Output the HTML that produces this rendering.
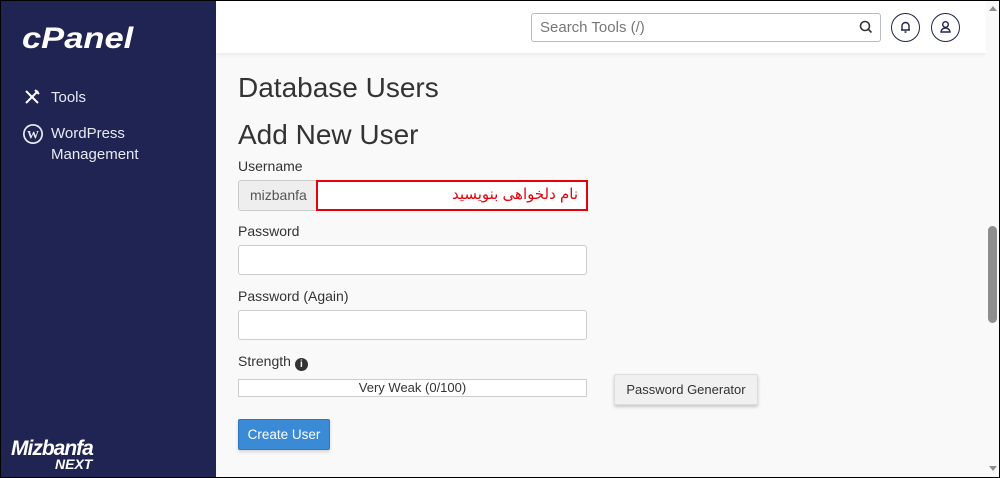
<!DOCTYPE html>
<html><head><meta charset="utf-8"><style>
*{box-sizing:border-box;margin:0;padding:0}
body{width:1000px;height:478px;overflow:hidden;background:#000;font-family:"Liberation Sans","DejaVu Sans",sans-serif;position:relative}
.frame{position:absolute;left:1px;top:1px;width:998px;height:476px;background:#f9f9f9;overflow:hidden}
.side{position:absolute;left:0;top:0;width:215px;height:476px;background:#1f2452;color:#e8e9f0}
.logo{position:absolute;left:21px;top:21px;font-size:30px;font-weight:bold;font-style:italic;color:#fff;letter-spacing:0px;transform:scaleX(1.15);transform-origin:left}
.nav{position:absolute;left:50px;font-size:15px;line-height:21px;color:#e8e9f2}
.hdr{position:absolute;left:215px;top:0;width:770px;height:52px;background:#fff;box-shadow:0 2px 4px rgba(0,0,0,.06)}
.search{position:absolute;left:315px;top:12px;width:350px;height:29px;border:1px solid #b9bcc4;border-radius:3px;font-size:15px;color:#777;padding:5px 8px}
.circ{position:absolute;top:12px;width:29px;height:29px;border:1.5px solid #1f2452;border-radius:50%}
.scroll{position:absolute;left:985px;top:0;width:13px;height:476px;background:#f9f9f9}
.thumb{position:absolute;left:987px;top:225px;width:9px;height:97px;background:#8e8e8e;border-radius:5px}
h1{position:absolute;left:237px;font-weight:normal;color:#333;font-size:28px}
.lbl{position:absolute;left:237px;font-size:14px;color:#333}
.inp{position:absolute;left:237px;width:349px;height:30px;background:#fff;border:1px solid #ccc;border-radius:3px}
.btn{position:absolute;font-size:14px;border-radius:2px}
</style></head><body><div class="frame">
<div class="side">
<div class="logo">cPanel</div>
<svg style="position:absolute;left:22px;top:87px" width="18" height="18" viewBox="0 0 18 18" fill="none" stroke="#fff" stroke-width="2"><path d="M3 3l12 12M15 3L3 15M12 2l4 4"/></svg>
<div class="nav" style="top:86px">Tools</div>
<svg style="position:absolute;left:21px;top:122px" width="22" height="22" viewBox="0 0 22 22"><circle cx="11" cy="11" r="10" fill="#e8e9f2"/><circle cx="11" cy="11" r="8.3" fill="#1f2452"/><text x="11" y="15.5" text-anchor="middle" font-size="12" font-weight="bold" fill="#e8e9f2" font-family="Liberation Serif">W</text></svg>
<div class="nav" style="top:122px">WordPress<br>Management</div>
<div style="position:absolute;left:10px;top:436px;font-size:21px;font-weight:bold;font-style:italic;color:#fff;letter-spacing:-1px">Mizbanfa</div>
<div style="position:absolute;left:54px;top:455px;font-size:14px;font-weight:bold;font-style:italic;color:#fff">NEXT</div>
</div>
<div class="hdr">
<div class="search">Search Tools (/)</div>
<svg style="position:absolute;left:643px;top:19px" width="14" height="14" viewBox="0 0 14 14" fill="none" stroke="#333" stroke-width="1.6"><circle cx="6" cy="6" r="4.5"/><path d="M9.5 9.5l3 3"/></svg>
<div class="circ" style="left:675px"><svg style="position:absolute;left:7px;top:6px" width="13" height="14" viewBox="0 0 13 14" fill="none" stroke="#1f2452" stroke-width="1.4"><path d="M3 10V6a3.5 3.5 0 017 0v4H2h9M5.5 12h2"/></svg></div>
<div class="circ" style="left:715px"><svg style="position:absolute;left:7px;top:6px" width="13" height="14" viewBox="0 0 13 14" fill="none" stroke="#1f2452" stroke-width="1.4"><circle cx="6.5" cy="4.5" r="2.8"/><path d="M2 12a4.5 4 0 019 0z"/></svg></div>
</div>
<div class="scroll"></div><div class="thumb"></div>
<div style="position:absolute;left:988px;top:5px;border:4px solid transparent;border-bottom:5px solid #8e8e8e;border-top:0"></div>
<div style="position:absolute;left:988px;top:465px;border:4px solid transparent;border-top:5px solid #8e8e8e;border-bottom:0"></div>
<h1 style="top:71px">Database Users</h1>
<h1 style="top:118px">Add New User</h1>
<div class="lbl" style="top:157px">Username</div>
<div style="position:absolute;left:237px;top:179px;width:80px;height:31px;background:#eee;border:1px solid #ccc;border-radius:3px 0 0 3px;font-size:14px;color:#555;padding:6px 0 0 11px">mizbanfa</div>
<div style="position:absolute;left:315px;top:179px;width:272px;height:31px;background:#fff;border:2px solid #e8000b;font-family:'Liberation Sans','DejaVu Sans',sans-serif;font-size:15px;color:#e8000b;text-align:right;padding:3px 8px 0 0" dir="rtl">نام دلخواهی بنویسید</div>
<div class="lbl" style="top:222px">Password</div>
<div class="inp" style="top:244px"></div>
<div class="lbl" style="top:287px">Password (Again)</div>
<div class="inp" style="top:309px"></div>
<div class="lbl" style="top:352px">Strength <span style="display:inline-block;width:13px;height:13px;border-radius:50%;background:#333;color:#fff;font-size:10px;font-weight:bold;text-align:center;line-height:13px;vertical-align:-1px">i</span></div>
<div style="position:absolute;left:237px;top:378px;width:349px;height:18px;background:#fff;border:1px solid #ccc;font-size:13px;color:#333;text-align:center;line-height:16px">Very Weak (0/100)</div>
<div class="btn" style="left:613px;top:373px;width:144px;height:31px;background:#f0f0f0;border:1px solid #ddd;color:#333;box-shadow:0 2px 3px rgba(0,0,0,.2);text-align:center;line-height:29px;font-size:13px">Password Generator</div>
<div class="btn" style="left:237px;top:418px;width:92px;height:31px;background:#3a8ad6;border:1px solid #2f78c0;color:#fff;text-align:center;line-height:29px;box-shadow:0 2px 3px rgba(0,0,0,.15);font-size:13.5px">Create User</div>
</div></body></html>
